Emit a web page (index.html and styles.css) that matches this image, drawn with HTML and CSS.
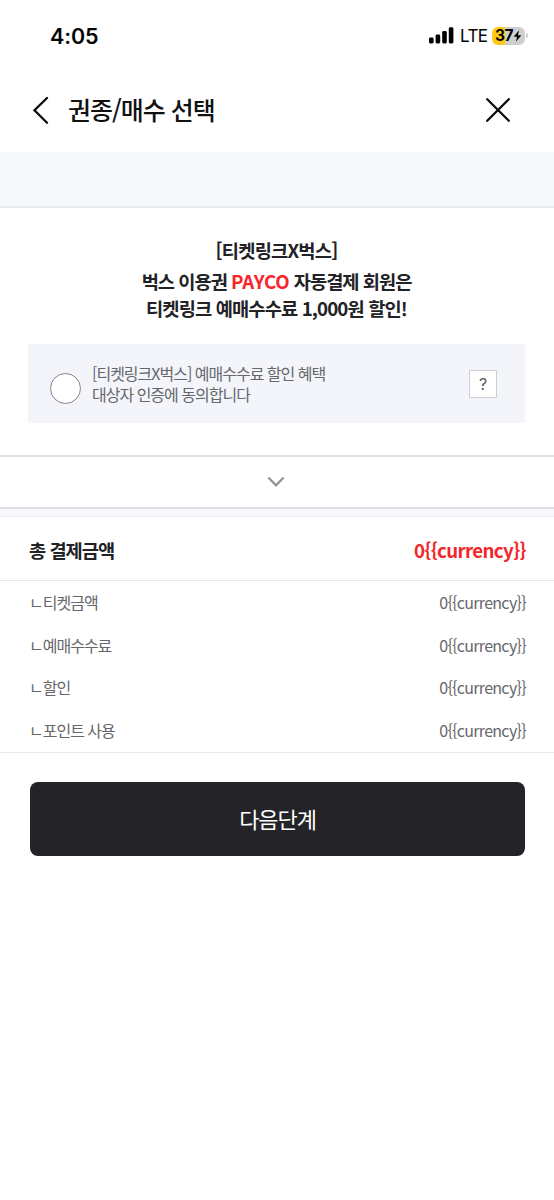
FILE: index.html
```html
<!DOCTYPE html>
<html lang="ko">
<head>
<meta charset="utf-8">
<title>권종/매수 선택</title>
<link rel="stylesheet" href="styles.css">
</head>
<body>
<div class="status">
  <span class="time">4:05</span>
  <div class="indicators">
    <svg class="signal" width="25" height="17" viewBox="0 0 25 17"><rect x="0" y="10.5" width="4.6" height="6" rx="1.4"/><rect x="6.6" y="7.5" width="4.6" height="9" rx="1.4"/><rect x="13.2" y="4" width="4.6" height="12.5" rx="1.4"/><rect x="19.8" y="0.3" width="4.6" height="16.2" rx="1.4"/></svg>
    <span class="network">LTE</span>
    <div class="battery"><span class="level">37</span><svg width="9" height="12" viewBox="0 0 9 12"><path d="M6.2 0.3L0.6 6.7H4.1L2.8 11.7L8.4 5.2H4.9Z"/></svg></div>
    <span class="battery-tip"></span>
  </div>
</div>
<header class="header">
  <svg class="back" width="18" height="28" viewBox="0 0 18 28"><path d="M15 2L2.5 14.3L15 26.7"/></svg>
  <h1 class="title">권종/매수 선택</h1>
  <svg class="close" width="24" height="24" viewBox="0 0 24 24"><path d="M1.2 1.2L22.8 22.8M22.8 1.2L1.2 22.8"/></svg>
</header>
<div class="band"></div>
<section class="promo">
  <p class="promo-head">[티켓링크X벅스]</p>
  <p class="promo-line">벅스 이용권 <span class="brand">PAYCO</span> 자동결제 회원은</p>
  <p class="promo-line last">티켓링크 예매수수료 1,000원 할인!</p>
  <div class="agree">
    <span class="radio"></span>
    <div class="agree-text"><p>[티켓링크X벅스] 예매수수료 할인 혜택</p><p>대상자 인증에 동의합니다</p></div>
    <span class="help">?</span>
  </div>
</section>
<div class="expand"><svg width="18" height="12" viewBox="0 0 18 12"><path d="M1.3 1.5L9 9.3L16.7 1.5"/></svg></div>
<div class="divider"></div>
<div class="total"><span>총 결제금액</span><span class="total-price">0{{currency}}</span></div>
<div class="details">
  <div class="row"><span>ㄴ티켓금액</span><span class="price">0{{currency}}</span></div>
  <div class="row"><span>ㄴ예매수수료</span><span class="price">0{{currency}}</span></div>
  <div class="row"><span>ㄴ할인</span><span class="price">0{{currency}}</span></div>
  <div class="row"><span>ㄴ포인트 사용</span><span class="price">0{{currency}}</span></div>
</div>
<button class="next">다음단계</button>
</body>
</html>
```
FILE: styles.css
```css
* { box-sizing: border-box; }
body { margin: 0; background: #fff; color: #222226; font-family: "Noto Sans CJK KR", sans-serif; }
p, h1 { margin: 0; }
svg { flex: none; display: block; }
span { white-space: nowrap; }
.status { height: 71px; padding: 0 28px 0 50px; display: flex; align-items: center; justify-content: space-between; font-family: Inter, sans-serif; color: #050505; }
.time { font-size: 21.5px; font-weight: 600; letter-spacing: -0.1px; }
.indicators { display: flex; align-items: center; }
.network { margin-left: 6px; width: 27px; font-size: 17px; font-weight: 400; letter-spacing: -0.6px; }
.battery { margin-left: 5px; width: 33px; height: 18px; border-radius: 6px; background: linear-gradient(90deg, #fbc916 0 12.5px, #cfcfcf 12.5px); display: flex; align-items: center; justify-content: center; gap: 0; font-size: 15.5px; font-weight: 700; }
.level { letter-spacing: -0.5px; }
.battery-tip { margin-left: 1px; margin-right: -2px; width: 2px; height: 5px; border-radius: 0 2px 2px 0; background: #cfcfcf; }
.header { height: 81px; padding: 0 44px 3px 32px; display: flex; align-items: center; }
.back, .close { fill: none; stroke: #0a0a0a; stroke-width: 2.3; stroke-linecap: round; }
.title { margin-left: 18px; margin-top: -2px; font-size: 25px; font-weight: 500; letter-spacing: -1px; line-height: 36px; color: #111; flex: 1; }
.band { height: 56px; background: #f7f8fb; border-bottom: 2px solid #e9ebf1; }
.promo { height: 247px; padding: 28px 29px 0 28px; text-align: center; }
.promo-head, .promo-line { font-size: 18.7px; font-weight: 700; letter-spacing: -0.9px; line-height: 28px; }
.promo-head { margin-bottom: 3px; letter-spacing: -0.8px; }
.promo-line { letter-spacing: -1px; }
.promo-line.last { margin-top: -1px; letter-spacing: -0.87px; }
.brand { color: #f7262b; letter-spacing: -0.2px; }
.agree { margin-top: 22px; height: 79px; padding: 0 28px 0 22px; background: #f4f5fa; display: flex; align-items: center; text-align: left; }
.radio { width: 31px; height: 31px; margin-top: 10px; border: 1.5px solid #85868b; border-radius: 50%; background: #fff; }
.agree-text { margin-left: 11px; flex: 1; font-size: 16px; line-height: 21px; letter-spacing: -1px; color: #66676d; }
.help { width: 28px; height: 28px; border: 1px solid #cfcfd2; background: #fff; text-align: center; font-family: Inter, sans-serif; font-size: 16px; line-height: 26px; color: #555; }
.expand { height: 54px; border-top: 2px solid #e2e2e4; border-bottom: 2px solid #dfdfe2; display: flex; align-items: center; justify-content: center; }
.expand svg { margin-right: 2px; fill: none; stroke: #949496; stroke-width: 2.4; }
.divider { height: 8px; background: #f7f8fb; border-bottom: 1px solid #eceef2; }
.total { height: 64px; padding: 2px 28px 0 29px; border-bottom: 1px solid #e6e7ed; display: flex; align-items: center; justify-content: space-between; font-size: 18.7px; font-weight: 700; letter-spacing: -1px; }
.total-price { color: #f3262b; letter-spacing: -0.65px; }
.details { height: 172px; padding: 0 28px 0 29px; border-bottom: 1px solid #e6e7ea; }
.row { height: 42.6px; display: flex; align-items: center; justify-content: space-between; font-size: 16px; letter-spacing: -1px; color: #66676d; }
.price { letter-spacing: -0.7px; }
.next { display: block; margin: 29px 29px 0 30px; width: 495px; height: 74px; border: 0; border-radius: 8px; background: #242328; color: #fff; font-family: inherit; font-size: 22px; letter-spacing: -1.1px; line-height: 30px; padding: 0 0 3px; }
```
